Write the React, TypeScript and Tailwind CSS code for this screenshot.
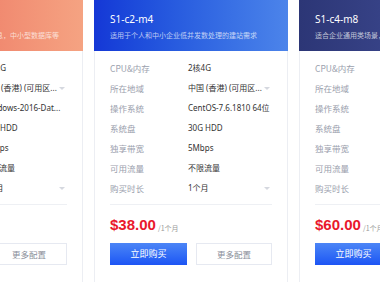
import React from "react";

type Row = { label: string; value: string; caret?: boolean };

const rowsFor = (v: string[]): Row[] => [
  { label: "CPU&内存", value: v[0] },
  { label: "所在地域", value: v[1], caret: true },
  { label: "操作系统", value: v[2] },
  { label: "系统盘", value: v[3] },
  { label: "独享带宽", value: v[4] },
  { label: "可用流量", value: v[5] },
  { label: "购买时长", value: v[6], caret: true },
];

type Card = {
  title: string;
  desc: string;
  header: string;
  price: string;
  rows: Row[];
};

const cards: Card[] = [
  {
    title: "S1-c2-m2",
    desc: "适用于网站、高网络包收发信息，中小型数据库等",
    header: "bg-gradient-to-r from-[#e9685a] to-[#f5a382]",
    price: "$28.00",
    rows: rowsFor(["2核2G", "中国 (香港) (可用区...", "Windows-2016-Dat...", "30G HDD", "3Mbps", "不限流量", "1个月"]),
  },
  {
    title: "S1-c2-m4",
    desc: "适用于个人和中小企业低并发数处理的建站需求",
    header: "bg-gradient-to-r from-[#1537d6] to-[#4c84ea]",
    price: "$38.00",
    rows: rowsFor(["2核4G", "中国 (香港) (可用区...", "CentOS-7.6.1810 64位", "30G HDD", "5Mbps", "不限流量", "1个月"]),
  },
  {
    title: "S1-c4-m8",
    desc: "适合企业通用类场景，高并发数处理的需求",
    header: "bg-gradient-to-r from-[#2c3676] to-[#45529c]",
    price: "$60.00",
    rows: rowsFor(["4核8G", "中国 (香港) (可用区...", "CentOS-7.6.1810 64位", "50G HDD", "8Mbps", "不限流量", "1个月"]),
  },
];

const CJK = { fontFamily: '"Noto Sans CJK SC", "Noto Sans", sans-serif' };

function Caret() {
  return (
    <span className="ml-auto w-0 h-0 border-l-[3px] border-r-[3px] border-t-[3px] border-l-transparent border-r-transparent border-t-[#d5d8df] mr-[2px]" />
  );
}

function PriceCard({ c }: { c: Card }) {
  return (
    <div className="w-[194px] shrink-0 h-[300px] border border-[#eceef3] bg-white flex flex-col">
      <div className={`h-[51px] -mx-px -mt-px px-[16px] pt-[11px] text-white ${c.header}`}>
        <div className="text-[10px] leading-[16px]">{c.title}</div>
        <div className="mt-[3px] text-[7px] leading-[10px] text-white/70 whitespace-nowrap" style={CJK}>
          {c.desc}
        </div>
      </div>
      <div className="px-[15px] pt-[7px]">
        {c.rows.map((r) => (
          <div key={r.label} className="h-[20px] flex items-center text-[8px]">
            <span className="w-[78px] shrink-0 text-[8.5px] text-[#9aa0ad]" style={CJK}>
              {r.label}
            </span>
            <span className="text-[#333] whitespace-nowrap">{r.value}</span>
            {r.caret && <Caret />}
          </div>
        ))}
        <div className="mt-[6px] h-px bg-[#eef0f4]" />
        <div className="mt-[9px] h-[20px] flex items-end">
          <span
            className="text-[15px] leading-[18px] font-bold text-[#e9192c]"
            style={{ fontFamily: '"Liberation Sans", Arial, sans-serif' }}
          >
            {c.price}
          </span>
          <span className="ml-[2px] mb-[2px] text-[7px] leading-[8px] text-[#999]" style={CJK}>
            /1个月
          </span>
        </div>
        <div className="mt-[9px] flex gap-[9px]">
          <button
            className="w-[78px] h-[22px] bg-gradient-to-b from-[#4c85f6] to-[#1d54f4] text-white text-[9px]"
            style={CJK}
          >
            立即购买
          </button>
          <button
            className="w-[77px] h-[22px] border border-[#e6e9f1] bg-white text-[#8a8f9a] text-[8.5px]"
            style={CJK}
          >
            更多配置
          </button>
        </div>
      </div>
    </div>
  );
}

export default function App() {
  return (
    <div
      className="w-[380px] h-[282px] overflow-hidden bg-white"
      style={{ fontFamily: '"Noto Sans", "Noto Sans CJK SC", sans-serif' }}
    >
      <div className="flex gap-[11px] ml-[-111px]">
        {cards.map((c) => (
          <PriceCard key={c.title} c={c} />
        ))}
      </div>
    </div>
  );
}
